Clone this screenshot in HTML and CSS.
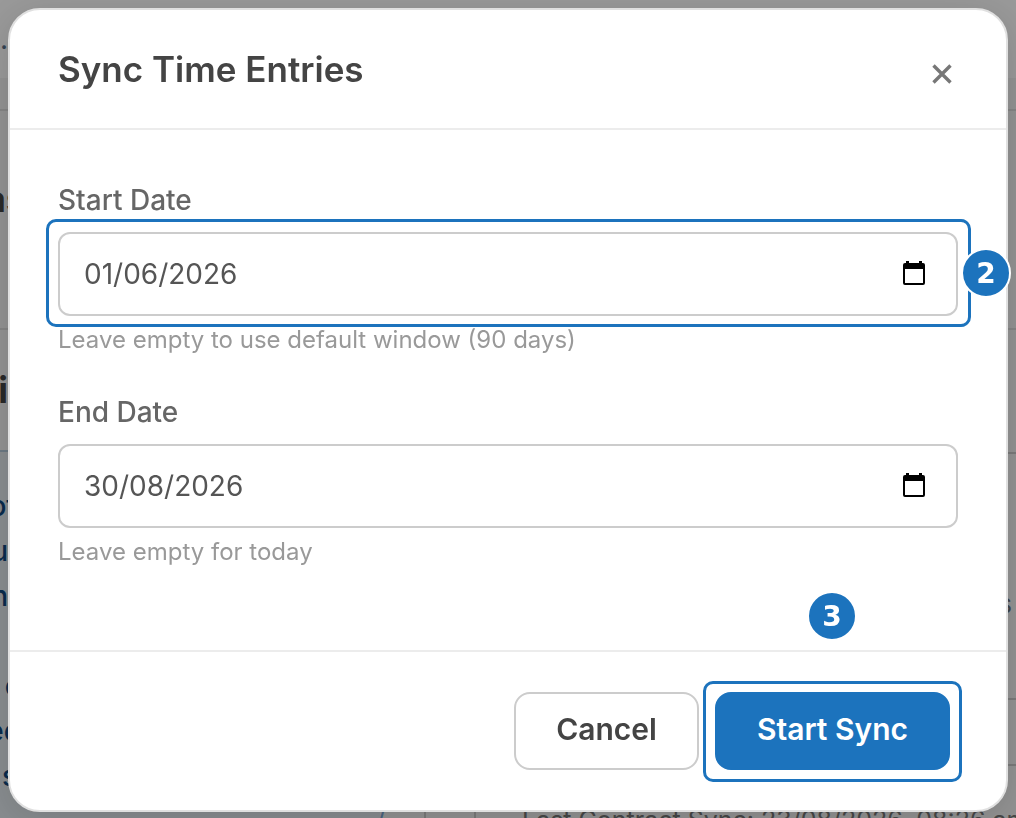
FILE: index.html
```html
<!DOCTYPE html>
<html lang="en">

<head>
    <meta charset="UTF-8">
    <meta name="viewport" content="width=device-width, initial-scale=1.0">
    <title>Sync Time Entries</title>
    <link rel="stylesheet" href="styles.css">
</head>

<body>
    <!-- page behind the dialog -->
    <div class="page">
        <div class="topbar">.</div>
        <div class="toolbar"></div>
        <div class="row row-title"><span>as</span></div>
        <div class="row row-section"><span>i</span></div>
        <div class="notice">
            <ul class="notice-text">
                <li class="medium">of</li>
                <li>u</li>
                <li>n</li>
                <li class="wide gap">c</li>
                <li class="wide">ed</li>
                <li class="medium">s</li>
            </ul>
            <div class="notice-side">
                <div class="side-cell side-first"></div>
                <div class="side-cell side-word">s</div>
                <div class="side-cell side-last"></div>
            </div>
        </div>
        <div class="status">
            <span class="tick">/</span>
            <span class="cell"></span>
            <span>Last Contract Sync: 23/08/2026, 08:26 am</span>
        </div>
    </div>

    <div class="overlay">
        <div class="modal" role="dialog" aria-labelledby="modal-title">
            <div class="modal-header">
                <h2 id="modal-title">Sync Time Entries</h2>
                <button class="close" type="button" aria-label="Close">
                    <svg width="20" height="20" viewBox="0 0 20 20">
                        <path d="M1.5 1.5 L18.5 18.5 M18.5 1.5 L1.5 18.5" />
                    </svg>
                </button>
            </div>

            <form class="modal-body">
                <div class="field">
                    <label for="start-date">Start Date</label>
                    <div class="date-box">
                        <input type="text" id="start-date" value="01/06/2026">
                        <button class="picker" type="button" aria-label="Pick start date">
                            <svg width="22" height="24" viewBox="0 0 22 24">
                                <path d="M3 0h3v2h10V0h3v2h1a2 2 0 0 1 2 2v18a2 2 0 0 1-2 2H2a2 2 0 0 1-2-2V4a2 2 0 0 1 2-2h1z M2 8v14h18V8z" />
                            </svg>
                        </button>
                        <span class="highlight"></span>
                        <span class="step step-side">2</span>
                    </div>
                    <small>Leave empty to use default window (90 days)</small>
                </div>
                <div class="field">
                    <label for="end-date">End Date</label>
                    <div class="date-box">
                        <input type="text" id="end-date" value="30/08/2026">
                        <button class="picker" type="button" aria-label="Pick end date">
                            <svg width="22" height="24" viewBox="0 0 22 24">
                                <path d="M3 0h3v2h10V0h3v2h1a2 2 0 0 1 2 2v18a2 2 0 0 1-2 2H2a2 2 0 0 1-2-2V4a2 2 0 0 1 2-2h1z M2 8v14h18V8z" />
                            </svg>
                        </button>
                    </div>
                    <small>Leave empty for today</small>
                </div>
            </form>

            <div class="modal-footer">
                <button class="btn" type="button">Cancel</button>
                <div class="btn-wrap">
                    <button class="btn btn-primary" type="button">Start Sync</button>
                    <span class="highlight"></span>
                    <span class="step step-top">3</span>
                </div>
            </div>
        </div>
    </div>
</body>

</html>
```
FILE: styles.css
```css
* {
    margin: 0;
    padding: 0;
    box-sizing: border-box;
}

body {
    font-family: Inter, "Liberation Sans", sans-serif;
    background: #fff;
}

button,
input {
    font-family: inherit;
}

/* page behind the dialog */
.page {
    height: 100vh;
    overflow: hidden;
    background: #f4f4f4;
    color: #444;
}

.topbar {
    height: 78px;
    background: #fff;
    color: #56708a;
    font-size: 28px;
    line-height: 78px;
}

.toolbar {
    height: 33px;
    border-bottom: 2px solid #ddd;
}

.row {
    display: flex;
    align-items: center;
    font-weight: 700;
}

.row span {
    display: flex;
    justify-content: flex-end;
}

.row-title {
    height: 219px;
    padding-bottom: 42px;
    border-bottom: 2px solid #ddd;
    font-size: 36px;
    color: #444;
}

.row-title span {
    width: 26px;
}

.row-section {
    height: 120px;
    font-size: 36px;
}

.row-section span {
    width: 8px;
}

.notice {
    display: flex;
    justify-content: space-between;
    height: 362px;
}

.notice-text {
    width: 30px;
    padding-top: 32px;
    border-top: 2px solid #b4cbdc;
    background: #e4ebf0;
    list-style: none;
    font-size: 28px;
    font-weight: 500;
    line-height: 45px;
    color: #0f4880;
}

.notice-text li {
    width: 8px;
    display: flex;
    justify-content: flex-end;
}

.notice-text .medium {
    width: 17px;
}

.notice-text .wide {
    width: 21px;
}

.notice-text .gap {
    margin-top: 45px;
}

.notice-side {
    width: 16px;
}

.side-cell {
    border-bottom: 2px solid #ccc;
}

.side-first {
    height: 4px;
}

.side-word {
    height: 246px;
    padding: 134px 4px 0 0;
    display: flex;
    justify-content: flex-end;
    font-size: 26px;
    color: #68727c;
}

.side-last {
    height: 66px;
}

.status {
    display: flex;
    background: linear-gradient(to right, #e4ebf0 380px, #f4f4f4 380px);
    padding-left: 376px;
    font-size: 25px;
    line-height: 16px;
    white-space: nowrap;
    color: #777;
}

.status span {
    flex-shrink: 0;
}

.status .tick {
    width: 48px;
    color: #7aa7d8;
}

.status .cell {
    width: 52px;
    margin-right: 46px;
    border: 2px solid #ccc;
    border-width: 0 2px;
}

/* dialog */
.overlay {
    position: fixed;
    top: 0;
    left: 0;
    width: 100%;
    height: 100%;
    padding: 8px;
    background: rgba(0, 0, 0, 0.4);
}

.modal {
    border: 2px solid #e0e0e0;
    border-radius: 32px;
    background: #fff;
    box-shadow: 0 8px 40px rgba(0, 0, 0, 0.15);
}

.modal-header {
    display: flex;
    justify-content: space-between;
    align-items: center;
    height: 120px;
    padding: 0 48px;
    border-bottom: 2px solid #ececec;
}

.modal-header h2 {
    font-size: 35px;
    font-weight: 600;
    line-height: 44px;
    color: #444;
}

.close {
    display: flex;
    margin-top: 10px;
    padding: 6px;
    border: none;
    background: none;
    cursor: pointer;
}

.close path {
    fill: none;
    stroke: #777;
    stroke-width: 3.4;
}

.modal-body {
    display: flex;
    flex-direction: column;
    gap: 36px;
    padding: 52px 48px 80px;
}

.field {
    display: flex;
    flex-direction: column;
}

.field label {
    margin-bottom: 14px;
    font-size: 28px;
    font-weight: 500;
    line-height: 36px;
    color: #666;
}

.field small {
    margin-top: 6px;
    font-size: 24px;
    line-height: 36px;
    color: #999;
}

.date-box {
    position: relative;
    display: flex;
    align-items: center;
    height: 84px;
    padding: 0 24px;
    border: 2px solid #ccc;
    border-radius: 12px;
}

.date-box input {
    flex: 1;
    min-width: 0;
    border: none;
    outline: none;
    background: none;
    font-size: 28px;
    color: #555;
}

.picker {
    display: flex;
    padding: 6px 7px 8px;
    border: none;
    background: none;
    cursor: pointer;
}

.picker path {
    fill: #000;
    fill-rule: evenodd;
}

.modal-footer {
    display: flex;
    justify-content: flex-end;
    gap: 16px;
    padding: 40px 56px;
    border-top: 2px solid #ececec;
}

.btn {
    height: 78px;
    padding: 0 40px 4px;
    border: 2px solid #ccc;
    border-radius: 16px;
    background: #fff;
    font-size: 30px;
    font-weight: 600;
    color: #444;
    cursor: pointer;
}

.btn-primary {
    border-color: #1c73bd;
    background: #1c73bd;
    color: #fff;
}

.btn-wrap {
    position: relative;
}

/* step markers */
.highlight {
    position: absolute;
    top: -15px;
    right: -15px;
    bottom: -13px;
    left: -14px;
    border: 3px solid #1c73bd;
    border-radius: 10px;
    pointer-events: none;
}

.btn-wrap .highlight {
    top: -11px;
    right: -12px;
    bottom: -12px;
    left: -12px;
}

.step {
    position: absolute;
    width: 50px;
    height: 50px;
    border: 2px solid #fff;
    border-radius: 50%;
    background: #1c73bd;
    font-family: "DejaVu Sans", sans-serif;
    font-size: 28px;
    font-weight: 700;
    line-height: 48px;
    text-align: center;
    color: #fff;
}

.step-side {
    top: 14px;
    right: -55px;
}

.step-top {
    top: -101px;
    left: 92px;
}
```
